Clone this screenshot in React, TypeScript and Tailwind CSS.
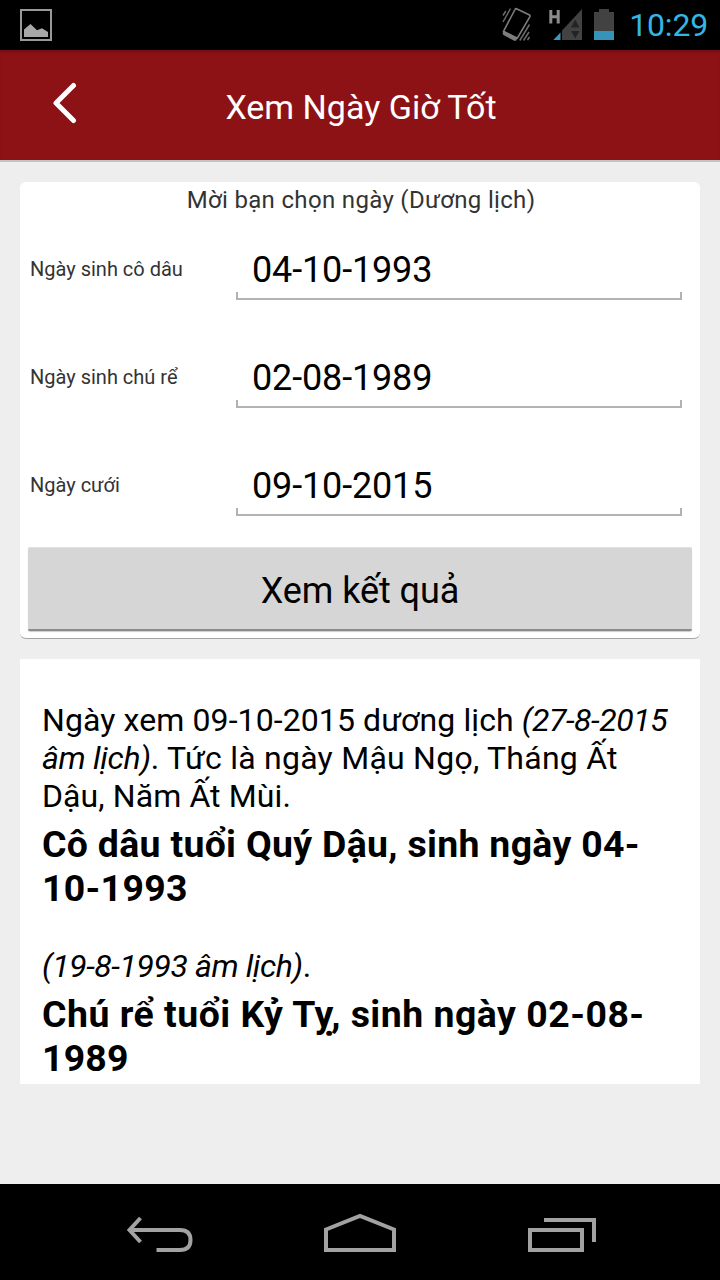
import type { ReactNode } from 'react'

const dateFields = [
  { label: 'Ngày sinh cô dâu', value: '04-10-1993' },
  { label: 'Ngày sinh chú rể', value: '02-08-1989' },
  { label: 'Ngày cưới', value: '09-10-2015' },
]

const StatusBar = () => (
  <div className="flex h-[50px] items-center justify-between bg-black pr-3 pl-5">
    <svg width="32" height="32" viewBox="0 0 32 32">
      <rect x="1" y="1" width="30" height="30" fill="none" stroke="#999" strokeWidth="2" />
      <path d="M4 28v-7.500l6.500-5.500 6.500 6.300 5-2 6 3.700v5z" fill="#a8a8a8" />
    </svg>
    <div className="flex items-center">
      {/* Vibrate */}
      <svg width="30" height="36" viewBox="0 0 30 36" className="mr-4">
        <path d="M14.500 1.700 27 7.700Q28.500 8.500 27.800 9.800L15.300 31.200 1.500 24.500 13 2.500Q13.500 1.400 14.500 1.700Z" fill="none" stroke="#7d7d7d" strokeWidth="1.600" />
        <path d="M1.500 23.500 15.800 31 14 33.500Q13.300 34.300 12.300 33.800L1.500 28Q.3 27 .8 25.500Z" fill="#7d7d7d" />
        <path d="M1 8.500 3.800 4M1 15 8.500 1.500M27.500 17.500 17.800 33.500M27 25 21.500 33.500M27.500 30 25.500 33" stroke="#6b6b6b" strokeWidth="1.500" fill="none" />
      </svg>
      {/* Signal with network type */}
      <svg width="34" height="34" viewBox="0 0 34 34" className="mr-3">
        <path d="M2.800 2v13.500M10.200 2v13.500M2.800 8.700h7.400" stroke="#8c8c8c" strokeWidth="3" fill="none" />
        <path d="M34 1v31H14V22.500z" fill="#424242" />
        <path d="M12.500 24.500V32H5.300z" fill="#3999c0" />
        <path d="M23 19.500 27.200 11.500 31.500 19.500zM23 23h8.500l-4.300 7.500z" fill="#242424" />
      </svg>
      {/* Battery */}
      <svg width="20" height="32" viewBox="0 0 20 32" className="mr-[15px]">
        <path d="M0 3h5V0h10v3h5v28H0z" fill="#424242" />
        <path d="M0 22h20v9H0z" fill="#3693ba" />
      </svg>
      <span className="text-[32px] leading-[38px] tracking-[-0.2px] text-[#33b5e5]">10:29</span>
    </div>
  </div>
)

const Header = () => (
  <header className="grid h-28 grid-cols-[128px_1fr_126px] items-center border-b-2 border-[#c5c4c4] bg-[#8d1216] shadow-[inset_0_3px_3px_-1px_rgba(0,0,0,0.2)]">
    <button className="mb-[5px] ml-[51px] w-7" aria-label="Quay lại">
      <svg width="26" height="42" viewBox="0 0 26 42">
        <path d="M22.500 3.500 5 21 22.500 38.500" fill="none" stroke="#fff" strokeWidth="5" strokeLinecap="round" strokeLinejoin="round" />
      </svg>
    </button>
    <h1 className="pt-1 text-center text-[34px] leading-[42px] text-white">Xem Ngày Giờ Tốt</h1>
  </header>
)

const DateField = ({ label, value }: { label: string; value: string }) => (
  <div className="flex h-[108px] items-center">
    <label className="w-[206px] text-[20px] text-[#333]">{label}</label>
    <div className="w-[446px] pt-3">
      <div className="pb-0.5 pl-4 text-[36px] leading-10 tracking-[-0.15px] text-black">{value}</div>
      {/* Underline with short upturned ends */}
      <div className="h-2 border-x-2 border-b-2 border-[#b2b2b2]" />
    </div>
  </div>
)

const NavIcon = ({ width, className, children }: { width: number; className?: string; children: ReactNode }) => (
  <svg width={width} height="40" viewBox={`0 0 ${width} 40`} className={className} fill="none" stroke="#a2a2a2" strokeWidth="4">
    {children}
  </svg>
)

const NavigationBar = () => (
  <nav className="flex h-24 items-center justify-between bg-black pt-0.5 pr-[124px] pl-[126px]">
    <NavIcon width={68}>
      <path d="M14.500 5 3.500 17 14.500 29M3.500 17H54Q64.500 17 64.500 27T54 37H30.500" />
    </NavIcon>
    <NavIcon width={72} className="-ml-0.5">
      <path d="M2 37V16.500L36 3 70 16.500V37z" />
    </NavIcon>
    <NavIcon width={68}>
      <path d="M2 17h52v20H2zM16 7h50v22" />
    </NavIcon>
  </nav>
)

const App = () => {
  return (
    <div className="flex h-[1280px] w-[720px] flex-col overflow-hidden bg-[#eee] font-['Roboto','Liberation_Sans',sans-serif]">
      <StatusBar />
      <Header />

      <main className="flex flex-1 flex-col gap-5 px-5 pt-5">
        <section className="h-[457px] rounded-md border-b border-[#a5a5a5] bg-white">
          <h2 className="h-[33px] pt-1 pl-0.5 text-center text-[24px] leading-7 tracking-[0.33px] text-[#333]">
            Mời bạn chọn ngày (Dương lịch)
          </h2>
          <div className="pl-[10px]">
            {dateFields.map((field) => (
              <DateField key={field.label} {...field} />
            ))}
          </div>
          <button className="mx-2 mt-2 block h-[84px] w-[664px] rounded-[2px] border-b-2 border-[#8b8b8b] bg-[#d6d6d6] pt-1.5 text-[36px] tracking-[-0.05px] text-black shadow-[inset_0_1px_0_#e2e2e2,0_1px_1px_#ccc]">
            Xem kết quả
          </button>
        </section>

        <section className="h-[425px] bg-white px-[22px] pt-[42px] text-black">
          <p className="text-[32px] leading-[38px] tracking-[0.1px]">
            Ngày xem 09-10-2015 dương lịch <em className="tracking-[-0.45px]">(27-8-2015</em>
            <br />
            <em className="tracking-[-0.3px]">âm lịch)</em>
            <span className="tracking-[0.25px]">. Tức là ngày Mậu Ngọ, Tháng Ất</span>
            <br />
            Dậu, Năm Ất Mùi.
          </p>
          <h3 className="mt-[7px] text-[37.44px] leading-[44px] font-bold tracking-[0.31px]">
            Cô dâu tuổi Quý Dậu, sinh ngày 04-<br />10-1993
          </h3>
          <p className="mt-[37px] text-[32px] leading-[38px]">
            <em className="tracking-[-0.43px]">(19-8-1993 âm lịch)</em>.
          </p>
          <h3 className="mt-[7px] text-[37.44px] leading-[44px] font-bold">
            <span className="tracking-[0.5px]">Chú rể tuổi Kỷ Tỵ, sinh ngày 02-08-</span>
            <br />
            <span className="tracking-[0.2px]">1989</span>
          </h3>
        </section>
      </main>

      <NavigationBar />
    </div>
  )
}

export default App
